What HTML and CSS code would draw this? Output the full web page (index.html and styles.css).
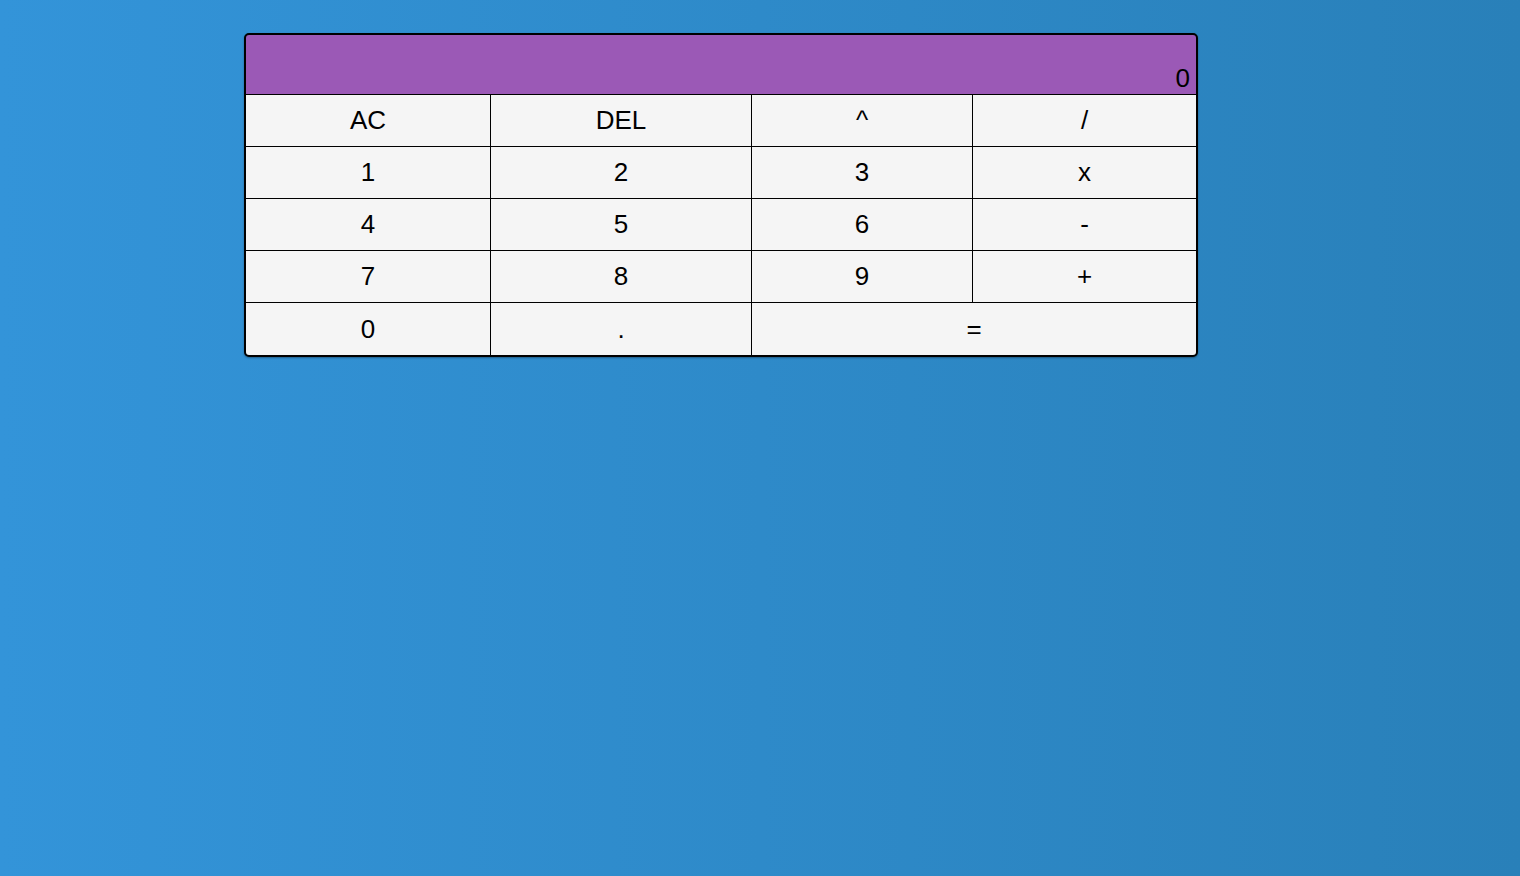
FILE: index.html
```html
<!DOCTYPE html>
<html lang="en">
<head>
<meta charset="utf-8">
<title>Calculator</title>
<link rel="stylesheet" href="styles.css">
</head>
<body>
<div class="calculator">
  <div class="display">0</div>
  <button class="key">AC</button>
  <button class="key">DEL</button>
  <button class="key">^</button>
  <button class="key">/</button>
  <button class="key">1</button>
  <button class="key">2</button>
  <button class="key">3</button>
  <button class="key">x</button>
  <button class="key">4</button>
  <button class="key">5</button>
  <button class="key">6</button>
  <button class="key">-</button>
  <button class="key">7</button>
  <button class="key">8</button>
  <button class="key">9</button>
  <button class="key">+</button>
  <button class="key">0</button>
  <button class="key">.</button>
  <button class="key key-wide">=</button>
</div>
</body>
</html>
```

FILE: styles.css
```css
html, body {
  margin: 0;
  height: 100%;
}

body {
  background: linear-gradient(to right, #3394d9, #2980b9);
  font-family: "Liberation Sans", Arial, sans-serif;
  padding-top: 33px;
  box-sizing: border-box;
}

.calculator {
  margin-left: 244px;
  width: 950px;
  display: grid;
  grid-template-columns: 244px 260px 220px 223px;
  grid-template-rows: 59px repeat(4, 51px) 52px;
  gap: 1px;
  background: #000;
  border: 2px solid #000;
  border-radius: 5px;
  overflow: hidden;
  box-shadow: 0 1px 2px rgba(0, 0, 0, 0.35);
}

.display {
  grid-column: 1 / -1;
  background: #9b59b6;
  color: #000;
  font-size: 26px;
  display: flex;
  justify-content: flex-end;
  align-items: flex-end;
  padding-right: 6px;
  padding-bottom: 2px;
  line-height: 28px;
}

.key {
  border: 0;
  margin: 0;
  padding: 0;
  background: #f5f5f5;
  color: #000;
  font-family: "Liberation Sans", Arial, sans-serif;
  font-size: 26px;
  cursor: pointer;
}

.key-wide {
  grid-column: span 2;
}
```
